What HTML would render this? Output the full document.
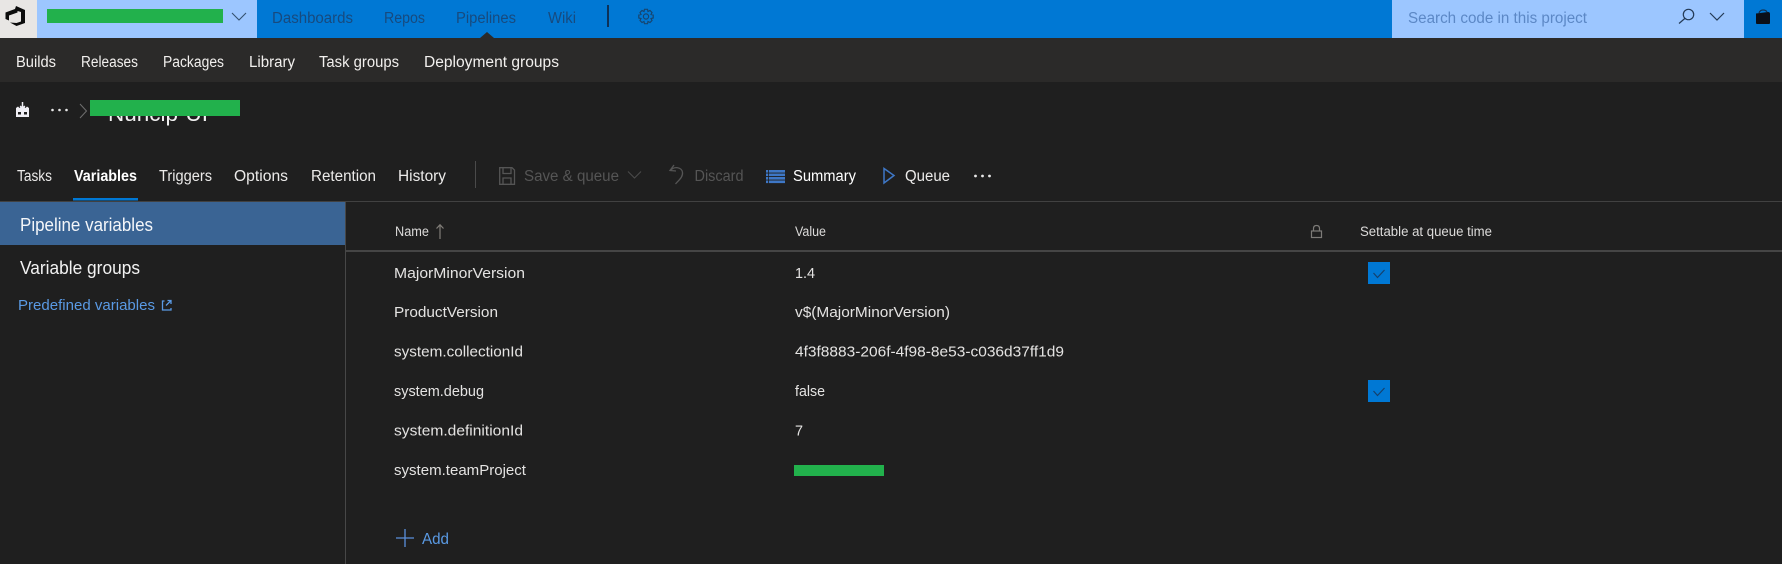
<!DOCTYPE html>
<html lang="en">
<head>
<meta charset="utf-8">
<title>Pipeline variables</title>
<style>
html,body{margin:0;padding:0;background:#1f1f1f;width:1782px;height:564px;overflow:hidden}
svg{display:block}
text{font-family:"Liberation Sans",sans-serif;font-size:15px}
.nav{fill:#174a7e;font-size:15.500px}
.sub{fill:#f2f0ee;font-size:15.500px}
.tab{fill:#ecebea;font-size:15.500px}
.off{fill:#555;font-size:15.500px}
.row{fill:#e4e3e2;font-size:15px}
.hd{fill:#dcdbda;font-size:13.500px}
</style>
</head>
<body>
<svg xmlns="http://www.w3.org/2000/svg" width="1782" height="564" viewBox="0 0 1782 564">
<rect width="1782" height="564" fill="#1f1f1f"/>
<!-- top bar -->
<rect width="1782" height="38" fill="#0078d4"/>
<rect width="37" height="38" fill="#e8e6e4"/>
<rect x="37" width="220" height="38" fill="#9cc6ff"/>
<path d="M5.500 12.500 L15 9 L16 6 L25 10 V23 L16.500 26 L10 22.500 L16.500 23 L21 21.500 V12 L17.500 11 V12.500 L9 15.500 V20.500 L5.500 19 Z" fill="#0c0c0c"/>
<rect x="47" y="9" width="176" height="14" fill="#22b14c"/>
<path d="M232 13 L239 20 L246 13" fill="none" stroke="#35516f" stroke-width="1.100"/>
<text class="nav" x="272" y="23" textLength="81" lengthAdjust="spacingAndGlyphs">Dashboards</text>
<text class="nav" x="384" y="23" textLength="41" lengthAdjust="spacingAndGlyphs">Repos</text>
<text class="nav" x="456" y="23" textLength="60" lengthAdjust="spacingAndGlyphs">Pipelines</text>
<text class="nav" x="548" y="23" textLength="28" lengthAdjust="spacingAndGlyphs">Wiki</text>
<rect x="607" y="5" width="2" height="22" fill="#0d3158"/>
<g transform="translate(646 16.500)" fill="none" stroke="#17456f" stroke-width="1.200">
<circle r="2.600"/>
<path d="M-1.500 -7.200 H1.500 L2 -5 L4 -6 L6 -4 L5 -2 L7.200 -1.500 V1.500 L5 2 L6 4 L4 6 L2 5 L1.500 7.200 H-1.500 L-2 5 L-4 6 L-6 4 L-5 2 L-7.200 1.500 V-1.500 L-5 -2 L-6 -4 L-4 -6 L-2 -5 Z"/>
</g>
<path d="M480 38 L487 32 L494 38 Z" fill="#2b2a29"/>
<rect x="1392" width="352" height="38" fill="#9cc6ff"/>
<text x="1408" y="23" fill="#5c88c6" style="font-size:15.500px" textLength="179" lengthAdjust="spacingAndGlyphs">Search code in this project</text>
<g fill="none" stroke="#243a55" stroke-width="1.200">
<circle cx="1688.500" cy="14.500" r="5.200"/>
<path d="M1684.800 18.500 L1679 23.500"/>
<path d="M1710 13 L1717 20 L1724 13"/>
</g>
<path d="M1756 13.500 L1768 12 Q1770 12 1770 14 V23 Q1770 24 1769 24 H1757 Q1756 24 1756 23 Z" fill="#0a0f18"/>
<path d="M1759 13 Q1760 10 1763 10 Q1766 10 1767 12" fill="none" stroke="#14304e" stroke-width="1.200"/>
<!-- sub bar -->
<rect y="38" width="1782" height="44" fill="#2b2a29"/>
<text class="sub" x="16" y="67" textLength="40" lengthAdjust="spacingAndGlyphs">Builds</text>
<text class="sub" x="81" y="67" textLength="57" lengthAdjust="spacingAndGlyphs">Releases</text>
<text class="sub" x="163" y="67" textLength="61" lengthAdjust="spacingAndGlyphs">Packages</text>
<text class="sub" x="249" y="67" textLength="46" lengthAdjust="spacingAndGlyphs">Library</text>
<text class="sub" x="319" y="67" textLength="80" lengthAdjust="spacingAndGlyphs">Task groups</text>
<text class="sub" x="424" y="67" textLength="135" lengthAdjust="spacingAndGlyphs">Deployment groups</text>
<!-- breadcrumb -->
<path d="M16 108 V117 H29 V108 L27 106.500 L25.500 108 L24 106.500 L22.500 108 L21 106.500 L19.500 108 L18 106.500 Z" fill="#f0eff5"/>
<rect x="18" y="112" width="3" height="2.500" fill="#1f1f1f"/><rect x="24" y="112" width="3" height="2.500" fill="#1f1f1f"/>
<path d="M22.500 102 V108 M20.200 106 L22.500 108.500 L24.800 106" fill="none" stroke="#f0eff5" stroke-width="1.500"/>
<g fill="#e8e8e8"><circle cx="52.500" cy="110" r="1.300"/><circle cx="59.500" cy="110" r="1.300"/><circle cx="66.500" cy="110" r="1.300"/></g>
<path d="M80 104 L86.500 111 L80 118" fill="none" stroke="#6f6f6f" stroke-width="1"/>
<text x="108" y="121" fill="#f2f2f2" style="font-size:21px" textLength="100" lengthAdjust="spacingAndGlyphs">Nuncip-UI</text>
<rect x="90" y="100" width="150" height="16" fill="#22b14c"/>
<!-- tabs -->
<text class="tab" x="17" y="181" textLength="35" lengthAdjust="spacingAndGlyphs">Tasks</text>
<text class="tab" x="74" y="181" font-weight="700" style="fill:#fff" textLength="63" lengthAdjust="spacingAndGlyphs">Variables</text>
<text class="tab" x="159" y="181" textLength="53" lengthAdjust="spacingAndGlyphs">Triggers</text>
<text class="tab" x="234" y="181" textLength="54" lengthAdjust="spacingAndGlyphs">Options</text>
<text class="tab" x="311" y="181" textLength="65" lengthAdjust="spacingAndGlyphs">Retention</text>
<text class="tab" x="398" y="181" textLength="48" lengthAdjust="spacingAndGlyphs">History</text>
<rect x="73" y="198" width="65" height="2.500" fill="#0078d4"/>
<rect x="475" y="161" width="1" height="27" fill="#4a4a4a"/>
<g fill="none" stroke="#555" stroke-width="1.300">
<path d="M499.700 167.700 H512 L514.500 170 V184.300 H499.700 Z"/>
<path d="M503 168 V173.500 H511 V168"/>
<path d="M503 184 V178 H511 V184"/>
</g>
<text class="off" x="524" y="181" textLength="95" lengthAdjust="spacingAndGlyphs">Save &amp; queue</text>
<path d="M628 171.500 L634.500 178 L641 171.500" fill="none" stroke="#4c4c4c" stroke-width="1"/>
<path d="M674 165 L670 170.500 L676 171 M670.500 170.500 C674 166 682 167 682.500 172.500 C683 177 679 180 675.500 184" fill="none" stroke="#555" stroke-width="1.300"/>
<text class="off" x="694.500" y="181" textLength="49" lengthAdjust="spacingAndGlyphs">Discard</text>
<g fill="#3e77c6">
<rect x="769" y="170" width="16" height="2.600"/><rect x="769" y="173.500" width="16" height="2.600"/><rect x="769" y="177" width="16" height="2.600"/><rect x="769" y="180.500" width="16" height="2.600"/>
<rect x="766" y="170" width="2.200" height="2.600"/><rect x="766" y="173.500" width="2.200" height="2.600"/><rect x="766" y="177" width="2.200" height="2.600"/><rect x="766" y="180.500" width="2.200" height="2.600"/>
</g>
<text class="tab" x="793" y="181" style="fill:#fff" textLength="63" lengthAdjust="spacingAndGlyphs">Summary</text>
<path d="M884 168.500 L894 175.500 L884 183 Z" fill="none" stroke="#3e77c6" stroke-width="1.500"/>
<text class="tab" x="905" y="181" textLength="45" lengthAdjust="spacingAndGlyphs">Queue</text>
<g fill="#e8e8e8"><circle cx="975.500" cy="176" r="1.400"/><circle cx="982.500" cy="176" r="1.400"/><circle cx="989.500" cy="176" r="1.400"/></g>
<rect y="201" width="1782" height="1" fill="#414141"/>
<!-- sidebar -->
<rect y="202" width="345" height="43" fill="#3a6494"/>
<text x="20" y="231" fill="#f4f6f9" style="font-size:18px" textLength="133" lengthAdjust="spacingAndGlyphs">Pipeline variables</text>
<text x="20" y="274" fill="#f2f2f2" style="font-size:18px" textLength="120" lengthAdjust="spacingAndGlyphs">Variable groups</text>
<text x="18" y="310" fill="#5a9ae4" style="font-size:15px" textLength="137" lengthAdjust="spacingAndGlyphs">Predefined variables</text>
<path d="M164.500 301 H162.500 V310 H171 V308 M166 305.500 L171 300.500 M167.500 300.500 H171 V304" fill="none" stroke="#5a9ae4" stroke-width="1.300"/>
<rect x="345" y="202" width="1" height="362" fill="#474747"/>
<!-- table header -->
<text class="hd" x="395" y="236" textLength="34" lengthAdjust="spacingAndGlyphs">Name</text>
<path d="M440 239 V225 M436.500 228.500 L440 224.800 L443.500 228.500" fill="none" stroke="#807d78" stroke-width="1.200"/>
<text class="hd" x="795" y="236" textLength="31" lengthAdjust="spacingAndGlyphs">Value</text>
<g fill="none" stroke="#7d7b78" stroke-width="1.200">
<rect x="1311.500" y="231" width="10" height="6.500"/>
<path d="M1313.500 231 V228.500 Q1313.500 225.500 1316.500 225.500 Q1319.500 225.500 1319.500 228.500 V231"/>
</g>
<text class="hd" x="1360" y="236" textLength="132" lengthAdjust="spacingAndGlyphs">Settable at queue time</text>
<rect x="346" y="250.500" width="1436" height="1" fill="#6b6b6b"/>
<!-- rows -->
<text class="row" x="394" y="278" textLength="131" lengthAdjust="spacingAndGlyphs">MajorMinorVersion</text>
<text class="row" x="795" y="278" textLength="20" lengthAdjust="spacingAndGlyphs">1.4</text>
<text class="row" x="394" y="317" textLength="104" lengthAdjust="spacingAndGlyphs">ProductVersion</text>
<text class="row" x="795" y="317" textLength="155" lengthAdjust="spacingAndGlyphs">v$(MajorMinorVersion)</text>
<text class="row" x="394" y="356.500" textLength="129" lengthAdjust="spacingAndGlyphs">system.collectionId</text>
<text class="row" x="795" y="356.500" textLength="269" lengthAdjust="spacingAndGlyphs">4f3f8883-206f-4f98-8e53-c036d37ff1d9</text>
<text class="row" x="394" y="396" textLength="90" lengthAdjust="spacingAndGlyphs">system.debug</text>
<text class="row" x="795" y="396" textLength="30" lengthAdjust="spacingAndGlyphs">false</text>
<text class="row" x="394" y="435.500" textLength="129" lengthAdjust="spacingAndGlyphs">system.definitionId</text>
<text class="row" x="795" y="435.500" textLength="8" lengthAdjust="spacingAndGlyphs">7</text>
<text class="row" x="394" y="475" textLength="132" lengthAdjust="spacingAndGlyphs">system.teamProject</text>
<rect x="794" y="465" width="90" height="11" fill="#22b14c"/>
<!-- checkboxes -->
<rect x="1368" y="262" width="22" height="22" fill="#0078d4"/>
<path d="M1373.500 273 L1377.500 277.500 L1384.500 270" fill="none" stroke="#15406c" stroke-width="1.200"/>
<rect x="1368" y="380" width="22" height="22" fill="#0078d4"/>
<path d="M1373.500 391 L1377.500 395.500 L1384.500 388" fill="none" stroke="#15406c" stroke-width="1.200"/>
<!-- add -->
<path d="M396 538 H414 M405 529 V547" fill="none" stroke="#5a8fdc" stroke-width="1.300"/>
<text x="422" y="544" fill="#5a9ae4" style="font-size:15.500px" textLength="27" lengthAdjust="spacingAndGlyphs">Add</text>
</svg>
</body>
</html>
